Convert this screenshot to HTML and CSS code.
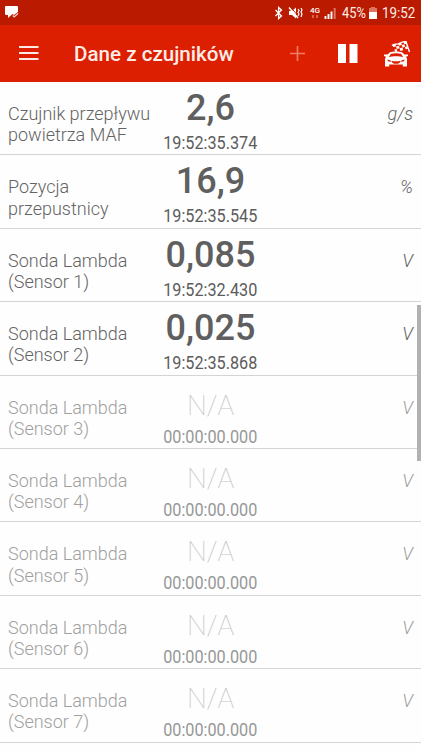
FILE: index.html
```
<!DOCTYPE html>
<html lang="pl">
<head>
<meta charset="utf-8">
<title>Dane z czujników</title>
<link rel="stylesheet" href="styles.css">
</head>
<body>
<div class="status">
  <svg class="notice" width="14" height="13" viewBox="0 0 14 13"><path d="M1 0h11a1 1 0 0 1 1 1v5L9 9 7.500 8 3 12V9H1a1 1 0 0 1-1-1V1a1 1 0 0 1 1-1z" fill="#fff"/><path d="M7.700 9.400l1.500 1.500L13 7.500" fill="none" stroke="#f5c9bd" stroke-width="1.400"/></svg>
  <svg class="indicators" width="65" height="16" viewBox="0 0 65 16">
    <path d="M1.500 5l6 6L4.600 13.500V2.500L7.500 5l-6 6" fill="none" stroke="#fff" stroke-width="1.300"/>
    <path d="M15 6h3l4-3.500v11L18 10h-3z" fill="#fff"/><path d="M16 1.500L25 12" stroke="#b91a00" stroke-width="1"/><path d="M15 2.500L24 13" stroke="#fff" stroke-width="1.500"/><path d="M24 4l1 1.500-1 2 1 1.500-1 2M27 3l1 2-1 2 1 2-1 3" fill="none" stroke="#fff" stroke-width="1.200"/>
    <text class="network" x="36" y="8">4G</text>
    <path d="M39 10v3M43 10v3" stroke="#df7561" stroke-width="1.600"/>
    <path d="M51.500 11v3M54.500 9v5M57.500 6.500v7.500" stroke="#fff" stroke-width="1.900"/><path d="M60.700 3v11" stroke="#df7561" stroke-width="2"/>
  </svg>
  <span class="percent">45%</span>
  <svg class="battery" width="8" height="12" viewBox="0 0 8 12"><path d="M2 0h4v1h2v4H0V1h2z" fill="#df7561"/><path d="M0 5h8v7H0z" fill="#fff"/></svg>
  <span class="clock">19:52</span>
</div>
<header class="bar">
  <svg class="menu" width="20" height="14" viewBox="0 0 20 14"><path d="M0 1h19.500M0 7h19.500M0 13h19.500" stroke="#ffe9e4" stroke-width="1.900"/></svg>
  <h1>Dane z czujników</h1>
  <svg class="add" width="15" height="15" viewBox="0 0 15 15"><path d="M7.500 0v15M0 7.500h15" stroke="#ee7c69" stroke-width="1.700"/></svg>
  <svg class="pause" width="20" height="19" viewBox="0 0 20 19"><path d="M0 0h8v19H0zM11.500 0h8v19h-8z" fill="#fff"/></svg>
  <svg class="race" width="26" height="26" viewBox="0 0 26 26">
    <path d="M8 4.500C11 1.500 13 4.500 16 2.300S20 1 22 .7L25.500 11" fill="none" stroke="#fff" stroke-width="1.400"/>
    <g fill="#fff" transform="translate(8.500 3.500) rotate(-14)">
      <path d="M0 0h3v2.700H0zM6 0h3v2.700H6zM11.500 0h2.500v2.700h-2.500zM3 2.700h3v2.700H3zM9 2.700h2.500v2.700H9zM.5 5.400H3v2.700H1zM6 5.400h3v2.700H6zM11.500 5.400H14v2.400h-2.500z"/>
    </g>
    <path fill-rule="evenodd" d="M0 13.500h3.500L6 11.200C9 10.200 15 10.200 18 11.200l2.500 2.300H24v1.500l-2 .8 1 2v7.700h-4.200v-2H5.200v2H1v-7.700l1-2-2-.8zM7 12.700l-2.200 3.300c4-.9 10.400-.9 14.400 0L17 12.700c-3-.7-7-.7-10 0zM3 18.500l1.500 2 3 .3-1.300-1.500zM21 18.500l-1.500 2-3 .3 1.300-1.500zM7.500 19.700c3 .7 6 .7 9 0-.5 2.500-2 3-4.500 3s-4-.5-4.500-3z"/>
  </svg>
</header>
<main class="list">
  <section class="row"><p class="name">Czujnik przepływu powietrza MAF</p><div class="reading"><b>2,6</b><time>19:52:35.374</time></div><i>g/s</i></section>
  <section class="row"><p class="name">Pozycja przepustnicy</p><div class="reading"><b>16,9</b><time>19:52:35.545</time></div><i>%</i></section>
  <section class="row"><p class="name">Sonda Lambda (Sensor 1)</p><div class="reading"><b>0,085</b><time>19:52:32.430</time></div><i>V</i></section>
  <section class="row"><p class="name">Sonda Lambda (Sensor 2)</p><div class="reading"><b>0,025</b><time>19:52:35.868</time></div><i>V</i></section>
  <section class="row off"><p class="name">Sonda Lambda (Sensor 3)</p><div class="reading"><b>N/A</b><time>00:00:00.000</time></div><i>V</i></section>
  <section class="row off"><p class="name">Sonda Lambda (Sensor 4)</p><div class="reading"><b>N/A</b><time>00:00:00.000</time></div><i>V</i></section>
  <section class="row off"><p class="name">Sonda Lambda (Sensor 5)</p><div class="reading"><b>N/A</b><time>00:00:00.000</time></div><i>V</i></section>
  <section class="row off"><p class="name">Sonda Lambda (Sensor 6)</p><div class="reading"><b>N/A</b><time>00:00:00.000</time></div><i>V</i></section>
  <section class="row off"><p class="name">Sonda Lambda (Sensor 7)</p><div class="reading"><b>N/A</b><time>00:00:00.000</time></div><i>V</i></section>
</main>
<div class="scrollbar"></div>
</body>
</html>
```
FILE: styles.css
```
* { box-sizing: border-box; }
body {
  margin: 0;
  width: 421px;
  height: 750px;
  overflow: hidden;
  background: #fefefe;
  font-family: Roboto, sans-serif;
}
svg { display: block; flex: none; }
.status {
  display: flex;
  align-items: center;
  height: 25px;
  padding: 0 6px 0 5px;
  background: #b91a00;
  color: #ffece7;
}
.indicators { margin-left: auto; }
.network { font: 500 8px Roboto, sans-serif; fill: #fff; }
.percent, .clock {
  padding-top: 2px;
  font-size: 15.5px;
  line-height: 23px;
  white-space: nowrap;
  transform: scaleX(.83);
  transform-origin: left;
}
.percent { width: 24px; margin-left: 3px; }
.battery { margin-left: 3px; }
.clock { width: 33px; margin-left: 5px; transform: scaleX(.86); }
.bar {
  display: flex;
  align-items: center;
  height: 57px;
  padding: 0 11px 0 19px;
  background: #db1f00;
}
h1 {
  flex: 1;
  margin: 0 0 0 35px;
  color: #ffece7;
  font-size: 20.6px;
  font-weight: 500;
  line-height: 24px;
  white-space: nowrap;
}
.menu { margin-top: -1px; }
.pause { margin: -1px 0 0 33px; }
.race { margin: 0 0 0 26px; fill: #fff; }
.row {
  display: grid;
  grid-template-columns: 1fr 100px 1fr;
  height: 73.4px;
  padding: 0 8px;
  border-bottom: 1px solid #d4d4d4;
  color: #636363;
}
.name {
  width: 150px;
  margin: 21px 0 0;
  font-size: 18px;
  font-weight: 300;
  line-height: 21.3px;
}
.reading { display: flex; flex-direction: column; align-items: center; }
.reading b {
  height: 36px;
  margin-top: 5px;
  color: #5f5f5f;
  font-size: 36px;
  font-weight: 500;
  line-height: 42px;
}
time {
  margin-top: 9px;
  color: #5c5c5c;
  font-size: 18px;
  line-height: 21px;
  transform: scaleX(.9);
}
.row i {
  justify-self: end;
  margin-top: 21px;
  font-size: 18px;
  font-weight: 300;
  line-height: 22px;
}
.off { color: #a0a0a0; }
.off .reading b { color: #c4c4c4; font-size: 28px; font-weight: 100; line-height: 49px; }
.off time { color: #979797; }
.scrollbar {
  position: absolute;
  top: 305px;
  right: 0;
  width: 4px;
  height: 156px;
  background: #b1b1b1;
}
```
